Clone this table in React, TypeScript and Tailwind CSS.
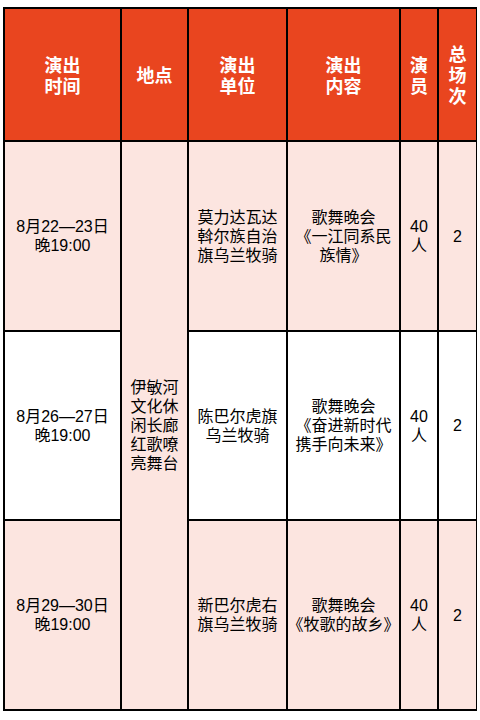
import React from "react";

const body = "text-[16px] leading-[19px] text-black";
const head = "text-[18px] leading-[21px] font-bold text-white";
const font = { fontFamily: '"Liberation Sans", "Noto Sans CJK SC", sans-serif' };
const hfont = { fontFamily: '"Noto Sans CJK SC", sans-serif' };

function Cell({ children, className = "" }: { children?: React.ReactNode; className?: string }) {
  return <div className={`flex items-center justify-center text-center ${className}`}>{children}</div>;
}

const rows = [
  {
    time: ["8月22—23日", "晚19:00"],
    unit: ["莫力达瓦达", "斡尔族自治", "旗乌兰牧骑"],
    content: ["歌舞晚会", "《一江同系民", "族情》"],
    bg: "bg-[#fce5e0]",
  },
  {
    time: ["8月26—27日", "晚19:00"],
    unit: ["陈巴尔虎旗", "乌兰牧骑"],
    content: ["歌舞晚会", "《奋进新时代", "携手向未来》"],
    bg: "bg-white",
  },
  {
    time: ["8月29—30日", "晚19:00"],
    unit: ["新巴尔虎右", "旗乌兰牧骑"],
    content: ["歌舞晚会", "《牧歌的故乡》"],
    bg: "bg-[#fce5e0]",
  },
];

function Lines({ lines }: { lines: string[] }) {
  return (
    <div>
      {lines.map((l, i) => (
        <div key={i} className="whitespace-nowrap">{l}</div>
      ))}
    </div>
  );
}

export default function App() {
  return (
    <div className="w-[480px] h-[720px] bg-white pt-[7px] pl-[3px]">
      <div
        className="grid w-[474px] bg-black gap-[2px] p-[2px] grid-cols-[115px_65px_97px_111px_36px_37px] grid-rows-[131px_188px_187px_188px]"
        style={font}
      >
        <Cell className={`bg-[#e9451f] ${head}`}>
          <div style={hfont}>演出<br />时间</div>
        </Cell>
        <Cell className={`bg-[#e9451f] ${head}`}>
          <div style={hfont}>地点</div>
        </Cell>
        <Cell className={`bg-[#e9451f] ${head}`}>
          <div style={hfont}>演出<br />单位</div>
        </Cell>
        <Cell className={`bg-[#e9451f] ${head}`}>
          <div style={hfont}>演出<br />内容</div>
        </Cell>
        <Cell className={`bg-[#e9451f] ${head}`}>
          <div style={hfont}>演<br />员</div>
        </Cell>
        <Cell className={`bg-[#e9451f] ${head}`}>
          <div style={hfont}>总<br />场<br />次</div>
        </Cell>

        {rows.map((r, i) => (
          <React.Fragment key={i}>
            <Cell className={`${r.bg} ${body} col-start-1`}>
              <Lines lines={r.time} />
            </Cell>
            {i === 0 && (
              <Cell className={`bg-[#fce5e0] ${body} col-start-2 row-start-2 row-span-3`}>
                <Lines lines={["伊敏河", "文化休", "闲长廊", "红歌嘹", "亮舞台"]} />
              </Cell>
            )}
            <Cell className={`${r.bg} ${body} col-start-3`}>
              <Lines lines={r.unit} />
            </Cell>
            <Cell className={`${r.bg} ${body}`}>
              <Lines lines={r.content} />
            </Cell>
            <Cell className={`${r.bg} ${body}`}>
              <Lines lines={["40", "人"]} />
            </Cell>
            <Cell className={`${r.bg} ${body}`}>
              <div>2</div>
            </Cell>
          </React.Fragment>
        ))}
      </div>
    </div>
  );
}
